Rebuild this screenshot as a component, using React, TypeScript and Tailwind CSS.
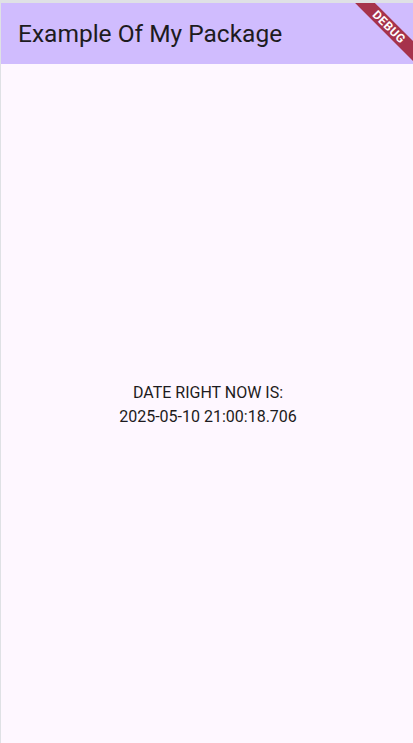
export default function App() {
  return (
    <div
      className="relative flex h-[743px] w-full flex-col overflow-hidden bg-[#dfe1e5] pt-[3px] pl-px"
      style={{ fontFamily: "Roboto, 'Noto Sans', sans-serif" }}
    >
      {/* App bar */}
      <header className="flex h-[61px] shrink-0 items-center bg-[#d0bcfe] pl-[17px]">
        <h1 className="text-[24.5px] leading-7 text-[#1d1b20]">Example Of My Package</h1>
      </header>

      {/* Body */}
      <main className="flex flex-1 flex-col items-center justify-center bg-[#fef7ff] pt-[2px] pl-[2px] text-base leading-6 text-[#1d1b20]">
        <p>DATE RIGHT NOW IS:</p>
        <p>2025-05-10 21:00:18.706</p>
      </main>

      {/* Debug ribbon */}
      <div className="pointer-events-none absolute top-[3px] right-0 h-[64px] w-[64px] overflow-hidden">
        <div className="absolute top-[17px] left-[-15px] flex h-[14px] w-[110px] rotate-45 items-center justify-center bg-[#a6334b]">
          <span className="text-[12px] leading-none font-bold tracking-[0.5px] text-white">DEBUG</span>
        </div>
      </div>
    </div>
  )
}
